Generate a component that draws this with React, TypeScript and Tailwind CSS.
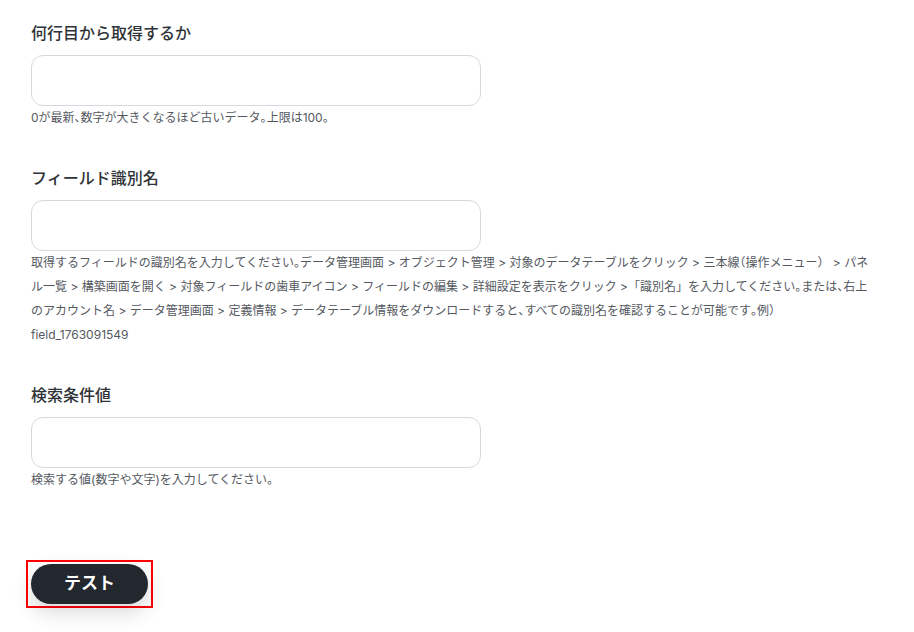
import type { ReactElement, ReactNode } from "react";

const font = { fontFamily: 'Inter, "Noto Sans CJK JP", sans-serif' };

// 句読点などを半角幅で詰める
function tighten(text: string): ReactNode[] {
  return text.split(/([、。（])/).map((part, i) =>
    /^[、。（]$/.test(part) ? (
      <span key={i} className="[font-feature-settings:'halt']">
        {part}
      </span>
    ) : (
      part
    ),
  );
}

function Field({ label, help }: { label: string; help: string }): ReactElement {
  return (
    <div>
      <div className="text-base leading-6 font-medium text-[#2f3337]">{label}</div>
      <input
        type="text"
        className="mt-2.5 block h-[51px] w-[450px] rounded-xl border border-[#d5d9df] bg-white px-4 text-sm outline-none"
      />
      <p className="text-xs leading-6 text-[#55595f]">{tighten(help)}</p>
    </div>
  );
}

export default function App(): ReactElement {
  return (
    <div className="min-h-screen bg-white px-[31px] pt-[21px]" style={font}>
      <div className="flex w-[846px] flex-col gap-9">
        <Field label="何行目から取得するか" help="0が最新、数字が大きくなるほど古いデータ。上限は100。" />
        <Field
          label="フィールド識別名"
          help="取得するフィールドの識別名を入力してください。データ管理画面 > オブジェクト管理 > 対象のデータテーブルをクリック > 三本線（操作メニュー） > パネル一覧 > 構築画面を開く > 対象フィールドの歯車アイコン > フィールドの編集 > 詳細設定を表示をクリック >「識別名」を入力してください。または、右上のアカウント名 > データ管理画面 > 定義情報 > データテーブル情報をダウンロードすると、すべての識別名を確認することが可能です。例）field_1763091549"
        />
        <Field label="検索条件値" help="検索する値(数字や文字)を入力してください。" />
      </div>

      <div className="-ml-[5px] mt-[68px] inline-block border-2 border-[#ff0000] px-[3px] py-[2px]">
        <button
          type="button"
          className="flex h-10 w-[117px] items-center justify-center rounded-full bg-[#23272e] text-[17px] font-bold text-white shadow-[0_8px_20px_rgba(35,39,46,0.18)]"
        >
          テスト
        </button>
      </div>
    </div>
  );
}
